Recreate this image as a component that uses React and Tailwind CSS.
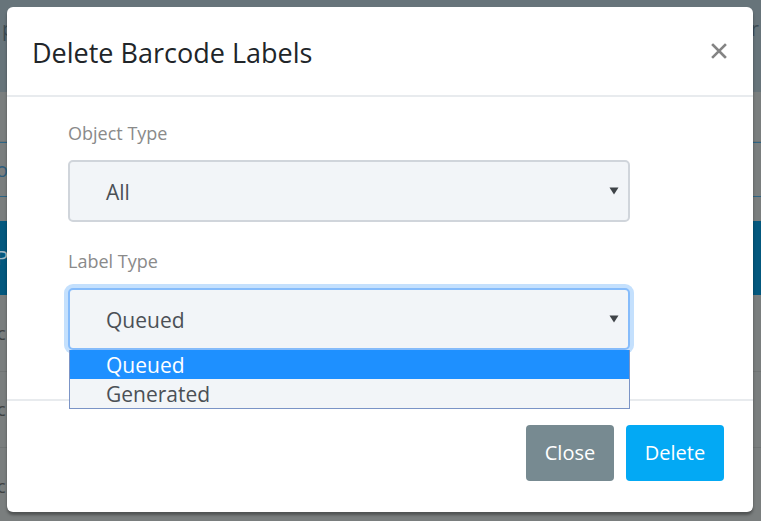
import React from "react";

function Caret() {
  return (
    <svg width="10" height="8" viewBox="0 0 10 8" className="shrink-0">
      <path d="M0.5 0.5 L9.5 0.5 L5 7.5 Z" fill="#3f4448" />
    </svg>
  );
}

function CloseX() {
  return (
    <svg width="16" height="16" viewBox="0 0 16 16">
      <path d="M2 2 L14 14 M14 2 L2 14" stroke="#848484" strokeWidth="2.6" strokeLinecap="square" />
    </svg>
  );
}

export default function App() {
  return (
    <div
      className="relative w-[761px] h-[521px] overflow-hidden bg-[#7a7e7e]"
      style={{ fontFamily: '"Open Sans", "Noto Sans", sans-serif' }}
    >
      {/* dimmed page behind */}
      <div className="flex flex-col">
        <div className="h-[92px] bg-[#67747a] flex justify-between px-[2px] pt-[14px] text-[20px] text-[#3c4a52]">
          <span>p</span>
          <span>ar</span>
        </div>
        <div className="h-[50px] border-b border-[#6f7474]" />
        <div className="h-[55px] border-y border-[#2d6585] flex items-center text-[20px] text-[#2d5d7d]">
          <span className="-ml-[4px]">o</span>
        </div>
        <div className="h-[24px]" />
        <div className="h-[74px] bg-[#03587e] flex items-center text-[20px] text-[#9fb7c4]">
          <span className="-ml-[4px]">P</span>
        </div>
        <div className="h-[77px] border-b border-[#707474] flex items-center text-[18px] text-[#3e4242]">
          <span className="-ml-[3px]">c</span>
        </div>
        <div className="h-[76px] border-b border-[#707474] flex items-center text-[18px] text-[#3e4242]">
          <span className="-ml-[3px]">c</span>
        </div>
        <div className="h-[76px] flex items-center text-[18px] text-[#3e4242]">
          <span className="-ml-[3px]">c</span>
        </div>
      </div>

      {/* modal */}
      <div className="absolute left-[7px] top-[7px] w-[746px] h-[505px] bg-white rounded-[6px] shadow-[0_3px_3px_rgba(0,0,0,0.35)] flex flex-col">
        <div className="h-[90px] shrink-0 border-b-2 border-[#e8ebee] flex items-center justify-between pl-[25px] pr-[26px]">
          <h4 className="text-[27px] text-[#212529] leading-none pt-[2px]">Delete Barcode Labels</h4>
          <CloseX />
        </div>

        <div className="relative h-[302px] shrink-0 pl-[61px] pt-[24px]">
          <div className="w-[562px] flex flex-col">
            <label className="text-[18px] leading-[24px] text-[#8a8a8a] mb-[15px]">Object Type</label>
            <div className="h-[62px] rounded-[5px] border-2 border-[#d0d5db] bg-[#f2f5f8] flex items-center justify-between pl-[36px] pr-[9px]">
              <span className="text-[21px] text-[#4b5056] pt-[3px]">All</span>
              <Caret />
            </div>
            <label className="text-[18px] leading-[24px] text-[#8a8a8a] mt-[27px] mb-[15px]">Label Type</label>
            <div className="relative">
              <div className="h-[62px] rounded-[5px] border-2 border-[#86bcfb] bg-[#f2f5f8] shadow-[0_0_0_4px_#c4e0fd] flex items-center justify-between pl-[36px] pr-[9px]">
                <span className="text-[21px] text-[#4b5056] pt-[3px]">Queued</span>
                <Caret />
              </div>
              <div className="absolute left-[1px] top-[62px] w-[561px] border border-t-0 border-[#7b94c6] bg-[#f2f5f8] z-10">
                <div className="h-[29px] bg-[#1e90ff] text-white text-[21px] leading-[31px] pl-[36px]">Queued</div>
                <div className="h-[29px] text-[#4b5056] text-[21px] leading-[31px] pl-[36px]">Generated</div>
              </div>
            </div>
          </div>
        </div>

        <div className="flex-1 border-t-2 border-[#e8ebee] flex justify-end items-start gap-[12px] pt-[24px] pr-[29px]">
          <button className="h-[56px] w-[88px] rounded-[4px] bg-[#778a91] text-white text-[20px]">Close</button>
          <button className="h-[56px] w-[98px] rounded-[4px] bg-[#03a9f4] text-white text-[20px]">Delete</button>
        </div>
      </div>
    </div>
  );
}
